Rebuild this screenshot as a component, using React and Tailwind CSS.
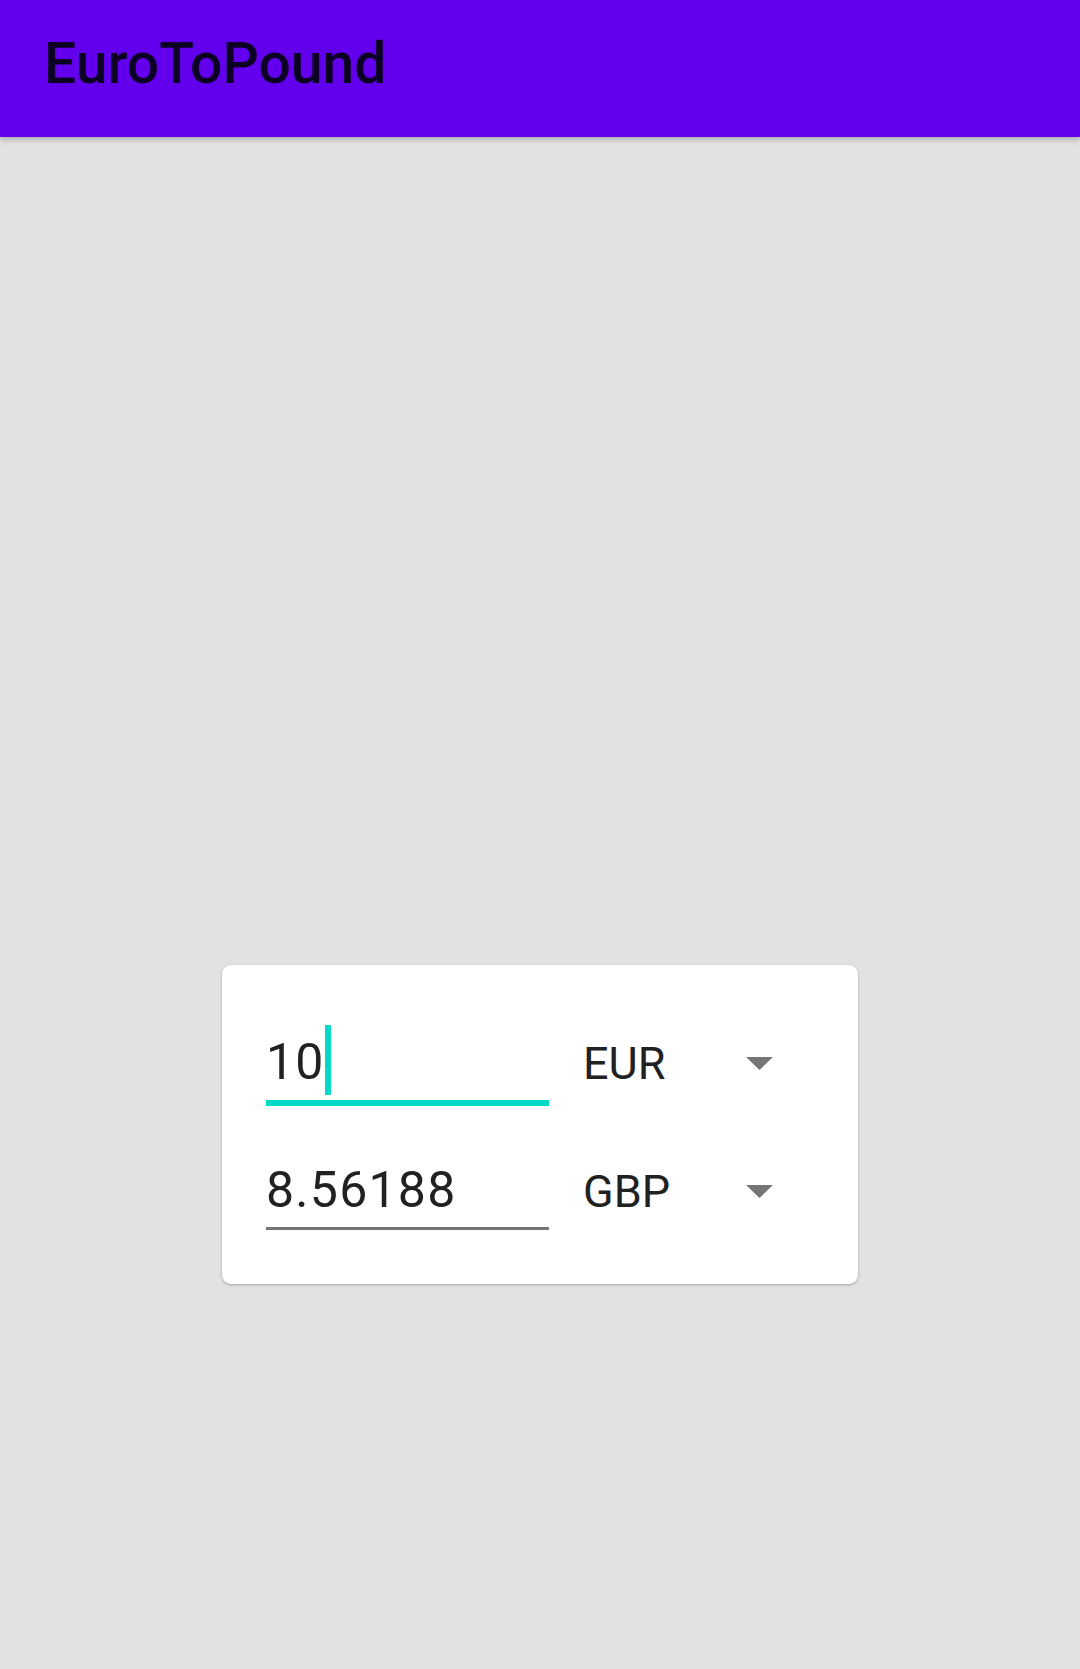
import React from 'react';

function Arrow() {
  return (
    <svg width="27" height="13" viewBox="0 0 27 13" className="shrink-0">
      <path d="M0 0 L27 0 L13.5 13 Z" fill="#757575" />
    </svg>
  );
}

function Spinner({ label }) {
  return (
    <div className="ml-[34px] flex items-center">
      <span className="w-[163px] text-[45px] leading-none text-[#212121]">{label}</span>
      <Arrow />
    </div>
  );
}

export default function App() {
  return (
    <div className="min-h-screen bg-[#e2e2e2]" style={{ fontFamily: 'Roboto, "Noto Sans", sans-serif' }}>
      <header className="relative z-10 h-[137px] bg-[#6200ee] pl-[44px] pt-[35px] shadow-[0_2px_6px_rgba(0,0,0,0.28)]">
        <h1 className="text-[57px] font-medium leading-none text-[#0c0024]">EuroToPound</h1>
      </header>

      <main className="flex justify-center pt-[828px]">
        <div className="w-[636px] rounded-[9px] bg-white px-[44px] pt-[68px] pb-[54px] shadow-[0_1px_3px_rgba(0,0,0,0.28)]">
          {/* amount in euro, focused */}
          <div className="flex items-baseline">
            <div className="w-[283px] border-b-[6px] border-[#03dac5] pb-[8px] text-[50px] leading-[59px] tracking-[0.025em] text-[#212121]">
              <span className="relative">
                10
                <span className="absolute left-full top-[-8px] h-[70px] w-[6px] bg-[#03dac5]" />
              </span>
            </div>
            <Spinner label="EUR" />
          </div>

          {/* converted amount */}
          <div className="mt-[55px] flex items-baseline">
            <div className="w-[283px] border-b-[3px] border-[#757575] pb-[7px] text-[50px] leading-[59px] tracking-[0.025em] text-[#212121]">
              8.56188
            </div>
            <Spinner label="GBP" />
          </div>
        </div>
      </main>
    </div>
  );
}
